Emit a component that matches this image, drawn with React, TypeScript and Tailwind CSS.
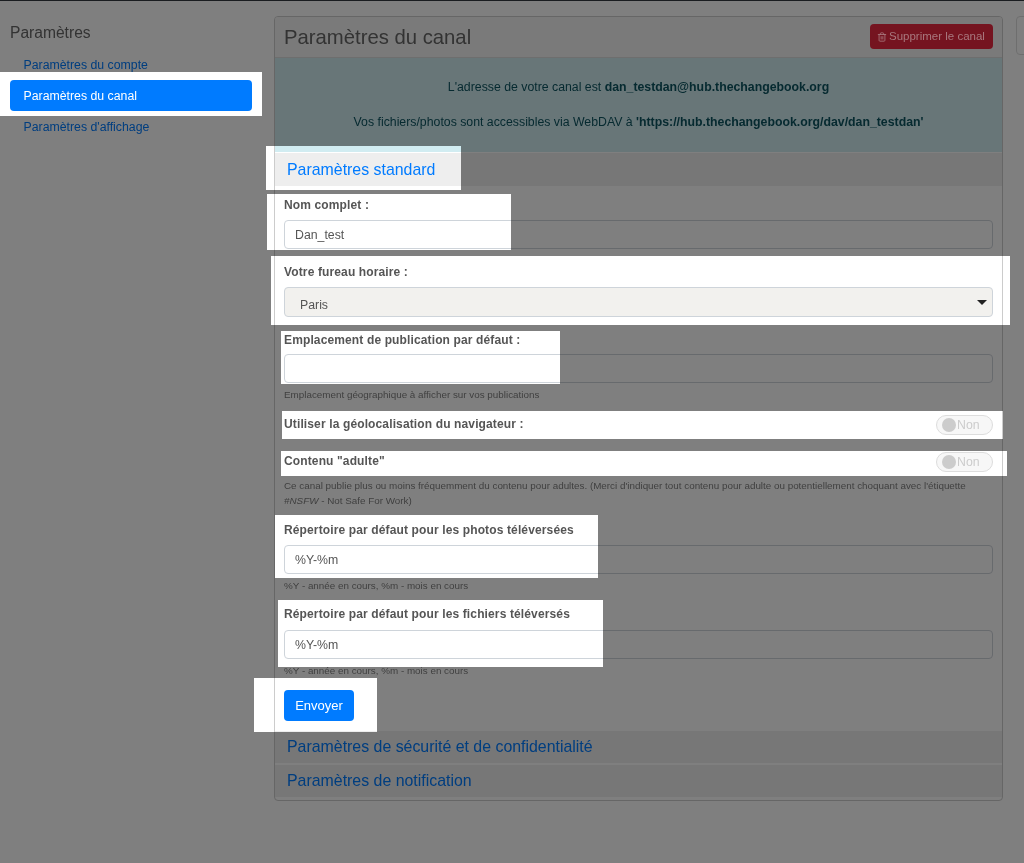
import { Trash2 } from "lucide-react";

const inputClass =
  "block w-full h-[29px] rounded-[4px] border border-[#ced4da] bg-white px-[10px] text-[12.3px] text-[#555] outline-none";
const labelClass = "block text-[12px] leading-[16px] font-bold tracking-[0.13px] text-[#555]";
const helpClass = "text-[9.85px] leading-[15px] text-[#808080]";

const Toggle = () => (
  <div className="flex h-[20px] w-[57px] items-center rounded-full border border-[#ddd] bg-[#f7f7f7] pl-[5px]">
    <span className="h-[14px] w-[14px] rounded-full bg-[#ccc]" />
    <span className="ml-[1px] text-[12.3px] text-[#ccc]">Non</span>
  </div>
);

const SectionHeader = ({ title }: { title: string }) => (
  <div className="h-[32px] bg-[#eee] px-[12px] text-[15.9px] leading-[31px] text-[#007bff]">
    {title}
  </div>
);

// zones left clear in the tour overlay
const spots = [
  "left-0 top-[72px] h-[44px] w-[262px]",
  "left-[266px] top-[146px] h-[44px] w-[195px]",
  "left-[267px] top-[194px] h-[56px] w-[244px]",
  "left-[271px] top-[256px] h-[69px] w-[739px]",
  "left-[281px] top-[331px] h-[53px] w-[279px]",
  "left-[282px] top-[411px] h-[28px] w-[721px]",
  "left-[281px] top-[451px] h-[25px] w-[726px]",
  "left-[275px] top-[515px] h-[63px] w-[323px]",
  "left-[278px] top-[600px] h-[67px] w-[325px]",
  "left-[254px] top-[678px] h-[54px] w-[123px]",
];

export default function App() {
  return (
    <div className="relative h-[863px] w-[1024px] overflow-hidden bg-white font-['Liberation_Sans',Arial,sans-serif] text-[12px] text-[#555]">
      <div className="h-[1px] bg-[#343a40]" />
      <div className="flex pt-[15px]">
        <aside className="ml-[10px] w-[242px] shrink-0">
          <div className="mt-[8px] text-[15.6px] leading-[17px] text-[#666]">Paramètres</div>
          <nav className="mt-[8px]">
            <a className="block h-[31px] px-[13.5px] text-[12.3px] leading-[33px] text-[#007bff]">Paramètres du compte</a>
            <a className="block h-[31px] rounded-[4px] bg-[#007bff] px-[13.5px] text-[12.3px] leading-[32px] text-white">Paramètres du canal</a>
            <a className="block h-[31px] px-[13.5px] text-[12.3px] leading-[33px] text-[#007bff]">Paramètres d'affichage</a>
          </nav>
        </aside>

        <main className="ml-[22px] h-[785px] w-[729px] shrink-0 overflow-hidden rounded-[4px] border border-[#ccc]">
          <div className="flex h-[41px] items-center justify-between border-b border-[#ddd] bg-[#f5f5f5] px-[9px]">
            <h2 className="text-[20.3px] text-[#666]">Paramètres du canal</h2>
            <button className="relative z-20 mb-[1px] flex h-[25px] w-[123px] items-center gap-[2px] rounded-[4px] bg-[#751420] pl-[7px] text-[11.5px] text-[#a8787e]">
              <Trash2 size={10} />
              Supprimer le canal
            </button>
          </div>
          <div className="flex h-[94px] flex-col items-center bg-[#d1ecf1] pt-[21px] text-[12.3px] leading-[16px] text-[#0c5460]">
            <p>L'adresse de votre canal est <b>dan_testdan@hub.thechangebook.org</b></p>
            <p className="mt-[19px]">Vos fichiers/photos sont accessibles via WebDAV à <b>'https://hub.thechangebook.org/dav/dan_testdan'</b></p>
          </div>
          <div className="h-[1px] bg-white" />
          <div className="h-[33px] bg-[#eee] px-[12px] text-[15.9px] leading-[33px] text-[#007bff]">Paramètres standard</div>

          <form className="px-[9px] pt-[11px]">
            <label className={labelClass}>Nom complet :</label>
            <input className={`${inputClass} mt-[7px]`} defaultValue="Dan_test" />

            <label className={`${labelClass} mt-[15px]`}>Votre fureau horaire :</label>
            <div className="relative mt-[7px]">
              <div className="h-[30px] rounded-[4px] border border-[#ced4da] bg-[#f2f1ee] pl-[15px] pt-[4px] text-[12.3px] leading-[26px] text-[#555]">Paris</div>
              <span className="absolute right-[6px] top-[13px] h-0 w-0 border-x-[5px] border-t-[5px] border-x-transparent border-t-[#222]" />
            </div>

            <label className={`${labelClass} mt-[15px]`}>Emplacement de publication par défaut :</label>
            <input className={`${inputClass} mt-[6px]`} />
            <div className={`${helpClass} mt-[4px]`}>Emplacement géographique à afficher sur vos publications</div>

            <div className="mt-[13px] flex h-[20px] items-center justify-between">
              <span className={`${labelClass} mb-[2px]`}>Utiliser la géolocalisation du navigateur :</span>
              <Toggle />
            </div>

            <div className="mt-[17px] flex h-[20px] items-center justify-between">
              <span className={`${labelClass} mb-[2px]`}>Contenu "adulte"</span>
              <Toggle />
            </div>
            <div className={`${helpClass} mt-[6px]`}>
              Ce canal publie plus ou moins fréquemment du contenu pour adultes. (Merci d'indiquer tout contenu pour adulte ou potentiellement choquant avec l'étiquette <i>#NSFW</i> - Not Safe For Work)
            </div>

            <label className={`${labelClass} mt-[14px]`}>Répertoire par défaut pour les photos téléversées</label>
            <input className={`${inputClass} mt-[7px]`} defaultValue="%Y-%m" />
            <div className={`${helpClass} mt-[4px]`}>%Y - année en cours, %m - mois en cours</div>

            <label className={`${labelClass} mt-[13px]`}>Répertoire par défaut pour les fichiers téléversés</label>
            <input className={`${inputClass} mt-[8px]`} defaultValue="%Y-%m" />
            <div className={`${helpClass} mt-[4px]`}>%Y - année en cours, %m - mois en cours</div>

            <button type="button" className="mt-[12px] block h-[31px] w-[70px] rounded-[4px] bg-[#007bff] text-[13px] text-white">Envoyer</button>
          </form>

          <div className="mt-[10px]">
            <SectionHeader title="Paramètres de sécurité et de confidentialité" />
            <div className="h-[2px]" />
            <SectionHeader title="Paramètres de notification" />
          </div>
        </main>

        <div className="ml-[13px] h-[39px] w-[20px] shrink-0 rounded-[4px] border border-[#ddd]" />
      </div>

      <div className="absolute inset-0 z-10 bg-black opacity-50 mix-blend-hard-light">
        {spots.map((spot) => (
          <div key={spot} className={`absolute bg-[#808080] ${spot}`} />
        ))}
      </div>
    </div>
  );
}
